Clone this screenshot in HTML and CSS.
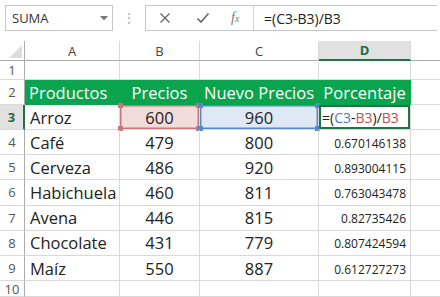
FILE: index.html
```html
<!DOCTYPE html>
<html lang="es">
<head>
    <meta charset="UTF-8">
    <title>Hoja de cálculo - Porcentaje</title>
    <link rel="stylesheet" href="styles.css">
</head>
<body>
    <div class="formula-bar">
        <div class="name-box">
            <span>SUMA</span>
            <svg class="drop" width="8" height="5" viewBox="0 0 8 5"><polygon points="0,0 8,0 4,4.5" fill="#777"/></svg>
        </div>
        <div class="grip">⋮</div>
        <div class="formula-box">
            <div class="fx-tools">
                <svg width="12" height="12" viewBox="0 0 12 12"><path d="M1.5 1.5 L10.5 10.5 M10.5 1.5 L1.5 10.5" stroke="#666" stroke-width="1.3" fill="none"/></svg>
                <svg width="14" height="12" viewBox="0 0 14 12"><path d="M1.5 6.5 L5 10 L12.5 1.5" stroke="#666" stroke-width="1.6" fill="none"/></svg>
                <span class="fx">f<small>x</small></span>
            </div>
            <div class="formula-text">=(C3-B3)/B3</div>
        </div>
    </div>

    <div class="sheet">
        <div class="cell corner"><svg width="13" height="13" viewBox="0 0 13 13"><polygon points="13,0 13,13 0,13" fill="#dcdcdc"/></svg></div>
        <div class="cell col-head">A</div>
        <div class="cell col-head">B</div>
        <div class="cell col-head">C</div>
        <div class="cell col-head active-col">D</div>
        <div class="cell col-head blank"></div>

        <div class="cell row-head">1</div>
        <div class="cell"></div><div class="cell"></div><div class="cell"></div><div class="cell"></div><div class="cell blank"></div>

        <div class="cell row-head">2</div>
        <div class="cell title left">Productos</div>
        <div class="cell title">Precios</div>
        <div class="cell title">Nuevo Precios</div>
        <div class="cell title">Porcentaje</div>
        <div class="cell blank"></div>

        <div class="cell row-head active-row">3</div>
        <div class="cell left">Arroz</div>
        <div class="cell num ref-red">600<i class="h tl"></i><i class="h tr"></i><i class="h bl"></i><i class="h br"></i></div>
        <div class="cell num ref-blue">960<i class="h tl"></i><i class="h tr"></i><i class="h bl"></i><i class="h br"></i></div>
        <div class="cell editing">=(<span class="c-blue">C3</span>-<span class="c-red">B3</span>)/<span class="c-red">B3</span></div>
        <div class="cell blank"></div>

        <div class="cell row-head">4</div>
        <div class="cell left">Café</div><div class="cell num">479</div><div class="cell num">800</div><div class="cell pct">0.670146138</div><div class="cell blank"></div>

        <div class="cell row-head">5</div>
        <div class="cell left">Cerveza</div><div class="cell num">486</div><div class="cell num">920</div><div class="cell pct">0.893004115</div><div class="cell blank"></div>

        <div class="cell row-head">6</div>
        <div class="cell left">Habichuela</div><div class="cell num">460</div><div class="cell num">811</div><div class="cell pct">0.763043478</div><div class="cell blank"></div>

        <div class="cell row-head">7</div>
        <div class="cell left">Avena</div><div class="cell num">446</div><div class="cell num">815</div><div class="cell pct">0.82735426</div><div class="cell blank"></div>

        <div class="cell row-head">8</div>
        <div class="cell left">Chocolate</div><div class="cell num">431</div><div class="cell num">779</div><div class="cell pct">0.807424594</div><div class="cell blank"></div>

        <div class="cell row-head">9</div>
        <div class="cell left">Maíz</div><div class="cell num">550</div><div class="cell num">887</div><div class="cell pct">0.612727273</div><div class="cell blank"></div>

        <div class="cell row-head last">10</div>
        <div class="cell"></div><div class="cell"></div><div class="cell"></div><div class="cell"></div><div class="cell blank"></div>
    </div>
</body>
</html>
```

FILE: styles.css
```css
body {
    margin: 0;
    width: 440px;
    height: 297px;
    overflow: hidden;
    background: #fff;
    font-family: 'Open Sans', 'Noto Sans', Arial, sans-serif;
    color: #222;
}
.formula-bar {
    height: 41px;
    display: flex;
    align-items: flex-start;
    padding: 5px 0 0 5px;
    box-sizing: border-box;
}
.name-box {
    width: 108px;
    height: 26px;
    border: 1px solid #c6c6c6;
    box-sizing: border-box;
    display: flex;
    align-items: center;
    justify-content: space-between;
    padding: 0 4px 0 6px;
    font-size: 13px;
    color: #333;
}
.grip {
    width: 32px;
    text-align: center;
    color: #b0b0b0;
    font-size: 14px;
    line-height: 26px;
}
.formula-box {
    flex: 1;
    height: 26px;
    margin-right: 3px;
    border: 1px solid #c6c6c6;
    border-right: none;
    box-sizing: border-box;
    display: flex;
    align-items: center;
}
.fx-tools {
    width: 108px;
    height: 100%;
    display: flex;
    align-items: center;
    gap: 25px;
    padding-left: 13px;
    box-sizing: border-box;
    border-right: 1px solid #d4d4d4;
}
.fx {
    font-family: 'Liberation Serif', 'DejaVu Serif', serif;
    font-style: italic;
    color: #777;
    font-size: 14px;
    margin-left: -4px;
}
.fx small {
    font-size: 10px;
}
.formula-text {
    padding-left: 10px;
    font-size: 14px;
    color: #222;
}
.sheet {
    display: grid;
    grid-template-columns: 25px 95px 80px 119px 92px 1fr;
    grid-template-rows: 20px 19px 25px 25px repeat(6, 25.2px);
}
.cell {
    position: relative;
    border-right: 1px solid #d9d9d9;
    border-bottom: 1px solid #d9d9d9;
    box-sizing: border-box;
    display: flex;
    align-items: center;
    justify-content: center;
    font-size: 16.5px;
    white-space: nowrap;
}
.cell.blank {
    border-right: none;
}
.corner {
    justify-content: flex-end;
    align-items: flex-end;
    padding: 0 2px 2px 0;
    border-bottom-color: #ababab;
    border-right-color: #ababab;
}
.col-head {
    font-size: 13px;
    color: #444;
    border-bottom-color: #ababab;
}
.active-col {
    background: #e1e1e1;
    color: #1e6b3a;
    font-weight: 700;
    border-bottom: 2px solid #217346;
}
.row-head {
    font-size: 13px;
    color: #555;
    border-right-color: #ababab;
}
.row-head.last {
    align-items: flex-start;
    padding-top: 2px;
    line-height: 13px;
}
.active-row {
    background: #e1e1e1;
    color: #1e6b3a;
    font-weight: 700;
    border-right: 2px solid #217346;
}
.left {
    justify-content: flex-start;
    padding-left: 5px;
}
.title {
    background: #0aa44e;
    color: #fff;
    border-right-color: #0aa44e;
    border-bottom-color: #0aa44e;
}
.title.left {
    padding-left: 4px;
}
.pct {
    justify-content: flex-end;
    padding-right: 4px;
    font-size: 12px;
    padding-top: 2px;
}
.ref-red {
    background: #f3dcdc;
    box-shadow: inset 0 0 0 1.5px #c7787b;
}
.ref-blue {
    background: #dfe8f5;
    box-shadow: inset 0 0 0 1.5px #5b87c6;
}
.h {
    position: absolute;
    width: 5px;
    height: 5px;
}
.ref-red .h { background: #c7787b; }
.ref-blue .h { background: #5b87c6; }
.h.tl { left: -2px; top: -2px; }
.h.tr { right: -2px; top: -2px; }
.h.bl { left: -2px; bottom: -2px; }
.h.br { right: -2px; bottom: -2px; }
.editing {
    justify-content: flex-start;
    padding-left: 3px;
    font-size: 14px;
    box-shadow: inset 0 0 0 2px #217346;
}
.c-blue { color: #4a7cc4; }
.c-red { color: #c0504d; }
```
